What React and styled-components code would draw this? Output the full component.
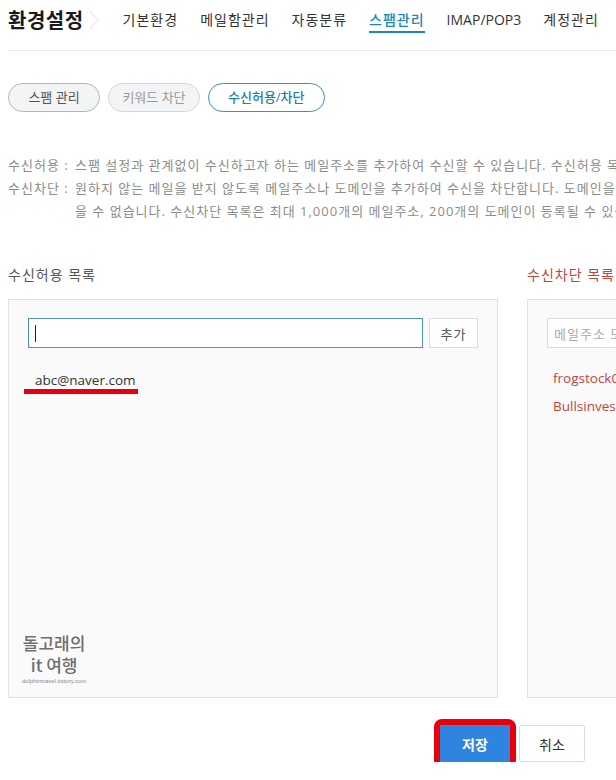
import React from "react";
import styled, { createGlobalStyle } from "styled-components";

const GlobalStyle = createGlobalStyle`
  html, body {
    margin: 0;
    padding: 0;
    background: #fff;
    overflow: hidden;
  }
  body {
    font-family: "Open Sans", "Noto Sans CJK KR", sans-serif;
    color: #333;
  }
  * { box-sizing: border-box; }
`;

const Page = styled.div`
  width: 1025px;
  padding: 0 8px;
`;

const Header = styled.header`
  display: flex;
  align-items: flex-start;
  height: 51px;
  border-bottom: 1px solid #e6e6e6;
`;

const Title = styled.h1`
  margin: 0;
  font-family: "Noto Sans CJK KR", sans-serif;
  font-size: 20px;
  font-weight: 700;
  letter-spacing: 0.5px;
  line-height: 40px;
  color: #1a1a1a;
`;

const Chevron = styled.span`
  display: flex;
  align-items: center;
  height: 40px;
  margin-left: 4px;
`;

const Nav = styled.nav`
  display: flex;
  gap: 22px;
  margin-left: 23px;
`;

const NavItem = styled.a`
  margin-top: 10px;
  padding-bottom: 1px;
  font-size: 14px;
  letter-spacing: ${p => (p.$latin ? "0" : "1px")};
  line-height: 20px;
  color: ${p => (p.$active ? "#1b88b6" : "#333")};
  font-weight: ${p => (p.$active ? 500 : 400)};
  border-bottom: 2px solid ${p => (p.$active ? "#1b88b6" : "transparent")};
  text-decoration: none;
  white-space: nowrap;
`;

const Tabs = styled.div`
  display: flex;
  gap: 8px;
  margin-top: 32px;
`;

const Pill = styled.button`
  min-width: 92px;
  height: 29px;
  padding: 0 ${p => (p.$active ? "19px" : "11px")};
  border-radius: 15px;
  border: 1px solid ${p => p.$border};
  background: ${p => (p.$active ? "#fff" : "#f3f4f6")};
  color: ${p => p.$color};
  font-family: "Open Sans", "Noto Sans CJK KR", sans-serif;
  font-size: 13px;
  font-weight: ${p => (p.$active ? 500 : 400)};
  line-height: 27px;
  cursor: pointer;
`;

const Desc = styled.div`
  margin-top: 42px;
  display: grid;
  grid-template-columns: 67px auto;
  font-size: 13px;
  letter-spacing: 1px;
  line-height: 23px;
  color: #8c8c8c;
  white-space: nowrap;
`;

const Columns = styled.div`
  display: grid;
  grid-template-columns: 490px 490px;
  column-gap: 29px;
  margin-top: ${p => p.$top || 0}px;
`;

const ListTitle = styled.h2`
  margin: 0;
  font-size: 14px;
  font-weight: 400;
  letter-spacing: 1px;
  line-height: 18px;
  color: ${p => (p.$danger ? "#c0463c" : "#555")};
`;

const Panel = styled.div`
  position: relative;
  height: 399px;
  padding: 18px 19px;
  background: #fafafa;
  border: 1px solid #e2e2e2;
`;

const InputRow = styled.div`
  display: flex;
  gap: 6px;
  height: 30px;
`;

const Field = styled.div`
  flex: 1;
  display: flex;
  align-items: center;
  padding: 0 6px;
  background: #fff;
  border: 1px solid ${p => (p.$focus ? "#4e97b4" : "#dcdcdc")};
  font-size: 13px;
  letter-spacing: 1px;
  color: #aaa;
  white-space: nowrap;
  overflow: hidden;
`;

const Caret = styled.span`
  width: 1px;
  height: 17px;
  background: #222;
`;

const AddButton = styled.button`
  width: 49px;
  height: 30px;
  padding: 0;
  background: #fff;
  border: 1px solid #dcdcdc;
  font-family: "Noto Sans CJK KR", sans-serif;
  font-size: 13px;
  letter-spacing: 1px;
  color: #555;
`;

const List = styled.ul`
  list-style: none;
  margin: ${p => p.$top}px 0 0;
  padding: 0 0 0 ${p => p.$indent}px;
`;

const Item = styled.li`
  font-size: 13.5px;
  line-height: ${p => p.$lh}px;
  color: ${p => (p.$danger ? "#c0463c" : "#333")};
  white-space: nowrap;
`;

const Marked = styled.span`
  position: relative;
  display: inline-block;

  &::after {
    content: "";
    position: absolute;
    left: -11px;
    right: -2px;
    top: 19px;
    height: 5px;
    background: #e60012;
  }
`;

const Watermark = styled.div`
  position: absolute;
  left: 13px;
  bottom: 12px;
  display: flex;
  flex-direction: column;
  align-items: center;
  color: #6e6e6e;
  font-family: "Noto Sans CJK KR", sans-serif;
`;

const MarkTitle = styled.span`
  font-size: 17px;
  font-weight: 500;
  line-height: 22px;
`;

const MarkUrl = styled.span`
  margin-top: 1px;
  font-family: "Liberation Sans", sans-serif;
  font-size: 6px;
  line-height: 8px;
  color: #888;
`;

const Actions = styled.div`
  display: flex;
  justify-content: center;
  gap: 9px;
  margin-top: 27px;
`;

const ActionButton = styled.button`
  width: ${p => p.$w}px;
  height: 37px;
  padding: 0;
  border: 1px solid ${p => (p.$primary ? "#2f84e0" : "#dcdcdc")};
  border-radius: 2px;
  background: ${p => (p.$primary ? "#2f84e0" : "#fff")};
  color: ${p => (p.$primary ? "#fff" : "#333")};
  font-family: "Noto Sans CJK KR", sans-serif;
  font-size: 14px;
  font-weight: ${p => (p.$primary ? 700 : 400)};
  outline: ${p => (p.$highlight ? "6px solid #e8000b" : "none")};
`;

const navItems = ["기본환경", "메일함관리", "자동분류", "스팸관리", "IMAP/POP3", "계정관리"];

export default function App() {
  return (
    <Page>
      <GlobalStyle />
      <Header>
        <Title>환경설정</Title>
        <Chevron>
          <svg width="12" height="22" viewBox="0 0 12 22">
            <polyline points="2,2 10,11 2,20" fill="none" stroke="#f2f2f2" strokeWidth="2" />
          </svg>
        </Chevron>
        <Nav>
          {navItems.map(n => (
            <NavItem key={n} $active={n === "스팸관리"} $latin={n === "IMAP/POP3"}>
              {n}
            </NavItem>
          ))}
        </Nav>
      </Header>

      <Tabs>
        <Pill $border="#b5b5b5" $color="#555">스팸 관리</Pill>
        <Pill $border="#d6d6d6" $color="#999">키워드 차단</Pill>
        <Pill $active $border="#3f8db2" $color="#1b7fad">수신허용/차단</Pill>
      </Tabs>

      <Desc>
        <span>수신허용 :</span>
        <span>스팸 설정과 관계없이 수신하고자 하는 메일주소를 추가하여 수신할 수 있습니다. 수신허용 목록은 최대 1,000개까지 등록할 수 있습니다.</span>
        <span>수신차단 :</span>
        <span>원하지 않는 메일을 받지 않도록 메일주소나 도메인을 추가하여 수신을 차단합니다. 도메인을 차단하면 해당 도메인의 메일을 받</span>
        <span />
        <span>을 수 없습니다. 수신차단 목록은 최대 1,000개의 메일주소, 200개의 도메인이 등록될 수 있습니다.</span>
      </Desc>

      <Columns $top={43}>
        <ListTitle>수신허용 목록</ListTitle>
        <ListTitle $danger>수신차단 목록</ListTitle>
      </Columns>

      <Columns $top={15}>
        <Panel>
          <InputRow>
            <Field $focus>
              <Caret />
            </Field>
            <AddButton type="button">추가</AddButton>
          </InputRow>
          <List $top={22} $indent={7}>
            <Item $lh={20}>
              <Marked>abc@naver.com</Marked>
            </Item>
          </List>
          <Watermark>
            <MarkTitle>돌고래의</MarkTitle>
            <MarkTitle>it 여행</MarkTitle>
            <MarkUrl>dolphintravel.tistory.com</MarkUrl>
          </Watermark>
        </Panel>
        <Panel>
          <InputRow>
            <Field>메일주소 또는 도메인을 입력하세요</Field>
            <AddButton type="button">추가</AddButton>
          </InputRow>
          <List $top={16} $indent={6}>
            <Item $lh={28} $danger>frogstock0@gmail.com</Item>
            <Item $lh={28} $danger>Bullsinvest@naver.com</Item>
          </List>
        </Panel>
      </Columns>

      <Actions>
        <ActionButton type="button" $w={70} $primary $highlight>
          저장
        </ActionButton>
        <ActionButton type="button" $w={66}>
          취소
        </ActionButton>
      </Actions>
    </Page>
  );
}
